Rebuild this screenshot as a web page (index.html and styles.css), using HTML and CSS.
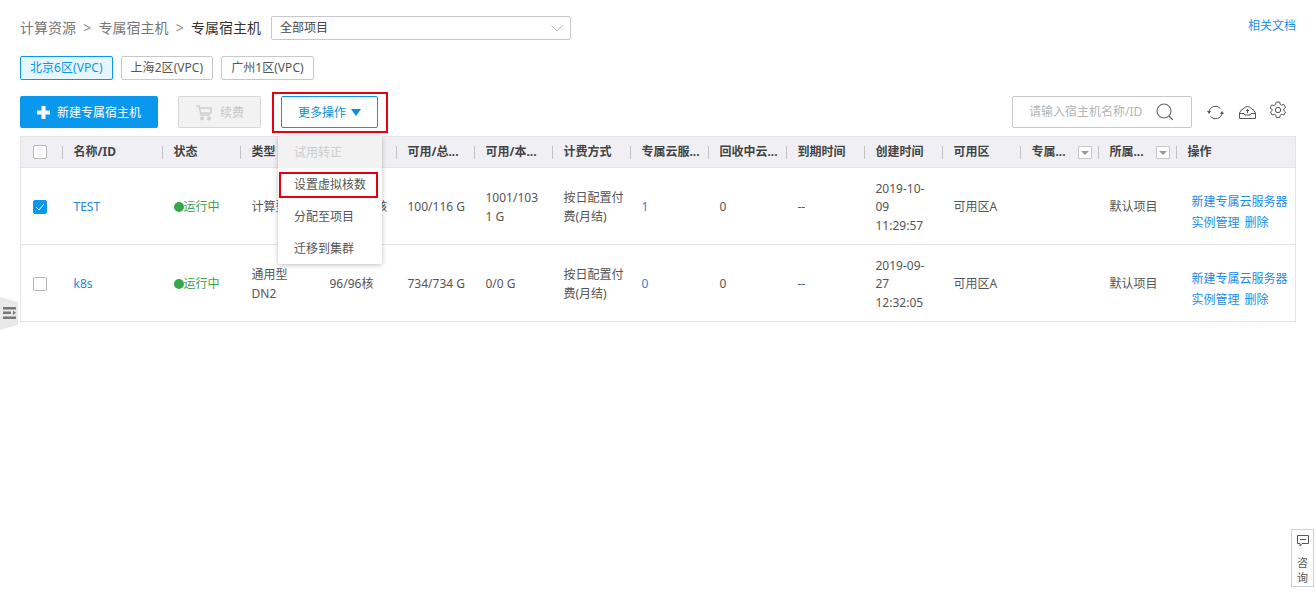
FILE: index.html
```html
<!DOCTYPE html>
<html lang="zh">
<head>
<meta charset="utf-8">
<title>专属宿主机</title>
<link rel="stylesheet" href="styles.css">
</head>
<body>
<main class="page">
  <header class="top">
    <nav class="crumbs">
      <span>计算资源</span><span class="sep">&gt;</span><span>专属宿主机</span><span class="sep">&gt;</span><span class="current">专属宿主机</span>
    </nav>
    <div class="select">全部项目
      <svg class="chev" width="12" height="7" viewBox="0 0 12 7"><path d="M.5.5 6 6 11.500.5" fill="none" stroke="#b4b4b4"/></svg>
    </div>
    <a class="doc">相关文档</a>
  </header>
  <div class="regions">
    <span class="region active">北京6区(VPC)</span>
    <span class="region">上海2区(VPC)</span>
    <span class="region">广州1区(VPC)</span>
  </div>
  <div class="toolbar">
    <button class="btn primary"><svg width="13" height="13" viewBox="0 0 13 13"><path d="M4.500 0h4v4.500H13v4H8.500V13h-4V8.500H0v-4h4.500z" fill="#fff"/></svg>新建专属宿主机</button>
    <button class="btn disabled"><svg width="18" height="16" viewBox="0 0 18 16" fill="none" stroke="#cfcfcf" stroke-width="1.500"><path d="M1 1h3l2 9h9M5 3h11v5H6"/><circle cx="7" cy="13.500" r="1.200"/><circle cx="14" cy="13.500" r="1.200"/></svg>续费</button>
    <div class="more-wrap">
      <button class="btn outline">更多操作<span class="tri"></span></button>
      <ul class="menu">
        <li class="off">试用转正</li>
        <li class="marked">设置虚拟核数</li>
        <li>分配至项目</li>
        <li>迁移到集群</li>
      </ul>
    </div>
    <div class="tools">
      <div class="search"><span>请输入宿主机名称/ID</span>
        <svg width="20" height="20" viewBox="0 0 20 20" fill="none" stroke="#666" stroke-width="1.100"><circle cx="9" cy="9" r="7"/><path d="m14 14 4 4"/></svg>
      </div>
      <svg class="tool refresh" width="17" height="17" viewBox="0 0 17 17" fill="none" stroke="#555"><path d="M2 8.500A6.500 6.500 0 0 1 13.500 4.500M15 8.500A6.500 6.500 0 0 1 3.500 12.500"/><path d="M0 7h4L2 10zM13 10h4l-2-3z" fill="#555" stroke="none"/></svg>
      <svg class="tool cloud" width="17" height="13" viewBox="0 0 17 13" fill="none" stroke="#555"><path d="M.5 7Q1.500 4 4 3 6.500.5 8.500.5T13 3q2.500 1 3.500 4v5.500H.5zM.5 7.500h4.500l1 1.500h5l1-1.500h4.500M8.500 7V3.500M7 5l1.500-1.500L10 5"/></svg>
      <svg class="tool gear" width="18" height="18" viewBox="0 0 18 18" fill="none" stroke="#555"><circle cx="9" cy="9" r="2.700"/><path d="M7.300 1h3.400l.5 2.300 1.400.8 2.200-.7 1.700 3-1.700 1.500v1.600l1.700 1.500-1.700 3-2.200-.7-1.400.8-.5 2.400H7.300l-.5-2.400-1.400-.8-2.200.7-1.700-3 1.700-1.500V8.400L1 6.900l1.700-3 2.200.7 1.400-.8z"/></svg>
    </div>
  </div>
  <table class="grid">
    <colgroup>
      <col class="c-check"><col class="c-name"><col span="13" class="c-std"><col class="c-act">
    </colgroup>
    <thead>
      <tr>
        <th class="cb"><span class="check"></span></th>
        <th><span class="lbl">名称/ID</span></th>
        <th><span class="lbl">状态</span></th>
        <th><span class="lbl">类型</span></th>
        <th><span class="lbl">虚拟核</span></th>
        <th><span class="lbl">可用/总...</span></th>
        <th><span class="lbl">可用/本...</span></th>
        <th><span class="lbl">计费方式</span></th>
        <th><span class="lbl">专属云服...</span></th>
        <th><span class="lbl">回收中云...</span></th>
        <th><span class="lbl">到期时间</span></th>
        <th><span class="lbl">创建时间</span></th>
        <th><span class="lbl">可用区</span></th>
        <th><span class="lbl">专属...</span><span class="filter"></span></th>
        <th><span class="lbl">所属...</span><span class="filter"></span></th>
        <th><span class="lbl">操作</span></th>
      </tr>
    </thead>
    <tbody>
      <tr>
        <td class="cb"><span class="check on"><svg width="10" height="8" viewBox="0 0 10 8"><path d="m1 4 3 3 5-6" fill="none" stroke="#fff"/></svg></span></td>
        <td><a>TEST</a></td>
        <td class="run"><i class="dot"></i>运行中</td>
        <td>计算型</td>
        <td>100/116核</td>
        <td>100/116 G</td>
        <td>1001/103<br>1 G</td>
        <td>按日配置付费(月结)</td>
        <td><a>1</a></td>
        <td>0</td>
        <td>--</td>
        <td>2019-10-09 11:29:57</td>
        <td>可用区A</td>
        <td></td>
        <td>默认项目</td>
        <td class="ops"><a>新建专属云服务器</a><a>实例管理</a><a>删除</a></td>
      </tr>
      <tr>
        <td class="cb"><span class="check"></span></td>
        <td><a>k8s</a></td>
        <td class="run"><i class="dot"></i>运行中</td>
        <td>通用型<br>DN2</td>
        <td>96/96核</td>
        <td>734/734 G</td>
        <td>0/0 G</td>
        <td>按日配置付费(月结)</td>
        <td><a>0</a></td>
        <td>0</td>
        <td>--</td>
        <td>2019-09-27 12:32:05</td>
        <td>可用区A</td>
        <td></td>
        <td>默认项目</td>
        <td class="ops"><a>新建专属云服务器</a><a>实例管理</a><a>删除</a></td>
      </tr>
    </tbody>
  </table>
</main>
<div class="handle"><svg width="16" height="14" viewBox="0 0 16 14"><path d="M2 1h13v2.500H2zM2 5.500h8V8H2zM12 4.500l3 2.300-3 2.200zM2 10.500h13V13H2z" fill="#777"/></svg></div>
<aside class="consult">
  <svg width="12" height="12" viewBox="0 0 12 12" fill="none" stroke="#555"><path d="M.5.500h11v8H5L3 11V8.500H.5z"/><path d="M3 4.500h6"/></svg>
  <span>咨</span><span>询</span>
</aside>
</body>
</html>
```
FILE: styles.css
```css
*, *::before, *::after { box-sizing: border-box; }
html, body { margin: 0; height: 100%; }
body {
  background: #fff;
  color: #555;
  font: 12px/18px "Noto Sans", "Noto Sans CJK SC", sans-serif;
  overflow: hidden;
}
a { color: #2a85dc; text-decoration: none; }
.page { padding: 16px 20px 0; }

.top { display: flex; align-items: center; height: 24px; }
.crumbs { display: flex; font-size: 14px; color: #777; white-space: nowrap; width: 251px; }
.crumbs .sep { margin: 0 7.250px; color: #888; }
.crumbs .current { color: #333; }
.select {
  position: relative;
  width: 300px;
  height: 24px;
  border: 1px solid #c8c8c8;
  border-radius: 2px;
  padding: 2px 8px;
  color: #444;
}
.chev { position: absolute; right: 7px; top: 8px; }
.doc { margin: -4px 0 0 auto; color: #1e90ee; }

.regions { display: flex; gap: 8px; margin-top: 16px; }
.region {
  height: 24px;
  padding: 2px 9px;
  border: 1px solid #c8c8c8;
  border-radius: 2px;
  color: #555;
  letter-spacing: .05px;
  white-space: nowrap;
}
.region.active { border-color: #0a97ee; background: #e6f6fe; color: #0a97ee; }

.toolbar { display: flex; align-items: flex-start; height: 32px; margin-top: 16px; }
.btn {
  display: flex;
  align-items: center;
  justify-content: center;
  height: 32px;
  border-radius: 2px;
  font: inherit;
  padding: 1px 0 0;
}
.primary { width: 138px; background: #0a97ee; border: 0; color: #fff; gap: 7px; }
.disabled { width: 83px; margin-left: 20px; background: #f2f2f2; border: 1px solid #d6d6d6; color: #c8c8c8; gap: 7px; }
.outline { width: 97px; background: #fff; border: 1px solid #0a97ee; color: #0a8ee0; gap: 5px; }
.tri { width: 0; height: 0; border: 5.500px solid transparent; border-top: 7px solid #0a8ee0; border-bottom: 0; }
.more-wrap { position: relative; margin-left: 20px; }
.more-wrap::before {
  content: "";
  position: absolute;
  inset: -4px -10px -5px -9px;
  border: 2px solid #e60012;
}
.menu {
  position: absolute;
  z-index: 3;
  left: -3px;
  top: 40px;
  width: 104px;
  margin: 0;
  padding: 0;
  list-style: none;
  background: #fff;
  border-radius: 2px;
  box-shadow: 0 1px 5px rgba(0, 0, 0, .25);
  color: #555;
}
.menu li { position: relative; height: 32px; line-height: 32px; padding: 1px 0 0 16px; white-space: nowrap; }
.menu .off { background: #f2f2f2; color: #ccc; }
.menu .marked::after {
  content: "";
  position: absolute;
  left: 1px;
  top: 4px;
  width: 99px;
  height: 26px;
  border: 2px solid #e60012;
}
.tools { display: flex; align-items: center; margin-left: auto; }
.search {
  display: flex;
  align-items: center;
  justify-content: space-between;
  width: 180px;
  height: 32px;
  padding: 0 16px;
  border: 1px solid #c8c8c8;
  border-radius: 2px;
  color: #b4b4b4;
  white-space: nowrap;
  margin-right: 15px;
}
.tool.refresh { margin-right: 15px; }
.tool.cloud { margin-right: 13px; }
.tool.gear { position: relative; top: -2px; margin-right: 9px; }

.grid {
  width: 1275px;
  margin-top: 8px;
  table-layout: fixed;
  border-collapse: collapse;
  border: 1px solid #e4e4e4;
}
.c-check { width: 41px; }
.c-name { width: 100px; }
.c-std { width: 78px; }
.c-act { width: 120px; }
thead tr { height: 31px; background: #f0f0f4; }
tbody tr { height: 77px; border-top: 1px solid #e4e4e4; }
th {
  position: relative;
  padding: 0 0 0 12px;
  text-align: left;
  font-weight: 700;
  color: #444;
  white-space: nowrap;
}
th + th::before {
  content: "";
  position: absolute;
  left: 0;
  top: 9px;
  width: 1px;
  height: 13px;
  background: #c4c4c4;
}
td { padding: 3px 5px 0 12px; overflow-wrap: anywhere; line-height: 18.500px; vertical-align: middle; }
th.cb { padding: 0 0 0 12px; }
td.cb { padding: 1px 0 0 12px; }
.check { display: block; width: 14px; height: 14px; border: 1px solid #b4b4b4; border-radius: 2px; background: #fff; }
.check.on { display: flex; align-items: center; justify-content: center; background: #0a97ee; border-color: #0a97ee; }
.run { color: #3aa14a; white-space: nowrap; }
.dot { display: inline-block; width: 10px; height: 10px; border-radius: 50%; background: #34a84a; vertical-align: -1px; }
.filter {
  position: absolute;
  right: 6px;
  top: 9px;
  width: 14px;
  height: 13px;
  border: 1px solid #c8c8c8;
  border-radius: 1px;
  background: #fff;
}
.filter::after {
  content: "";
  position: absolute;
  left: 2px;
  top: 4px;
  border: 4px solid transparent;
  border-top: 4px solid #999;
  border-bottom: 0;
}
td.ops { padding: 12px 0 0 16px; line-height: 21px; word-break: keep-all; }
.ops a { margin-right: 5px; color: #1a8cf0; }
.ops a:first-child { display: block; margin: 0; }

.handle {
  position: absolute;
  left: 0;
  top: 297px;
  width: 18px;
  height: 33px;
  padding: 9px 0 0 1px;
  background: #e9e9e9;
  clip-path: polygon(0 0, 100% 15%, 100% 85%, 0 100%);
}
.handle svg { display: block; }
.consult {
  position: absolute;
  left: 1291px;
  top: 529px;
  width: 23px;
  height: 58px;
  border: 1px solid #cdd3dc;
  background: #fff;
  display: flex;
  flex-direction: column;
  align-items: center;
  padding-top: 5px;
  font-size: 11px;
  line-height: 15px;
  color: #555;
}
.consult svg { margin-bottom: 8px; }
```
